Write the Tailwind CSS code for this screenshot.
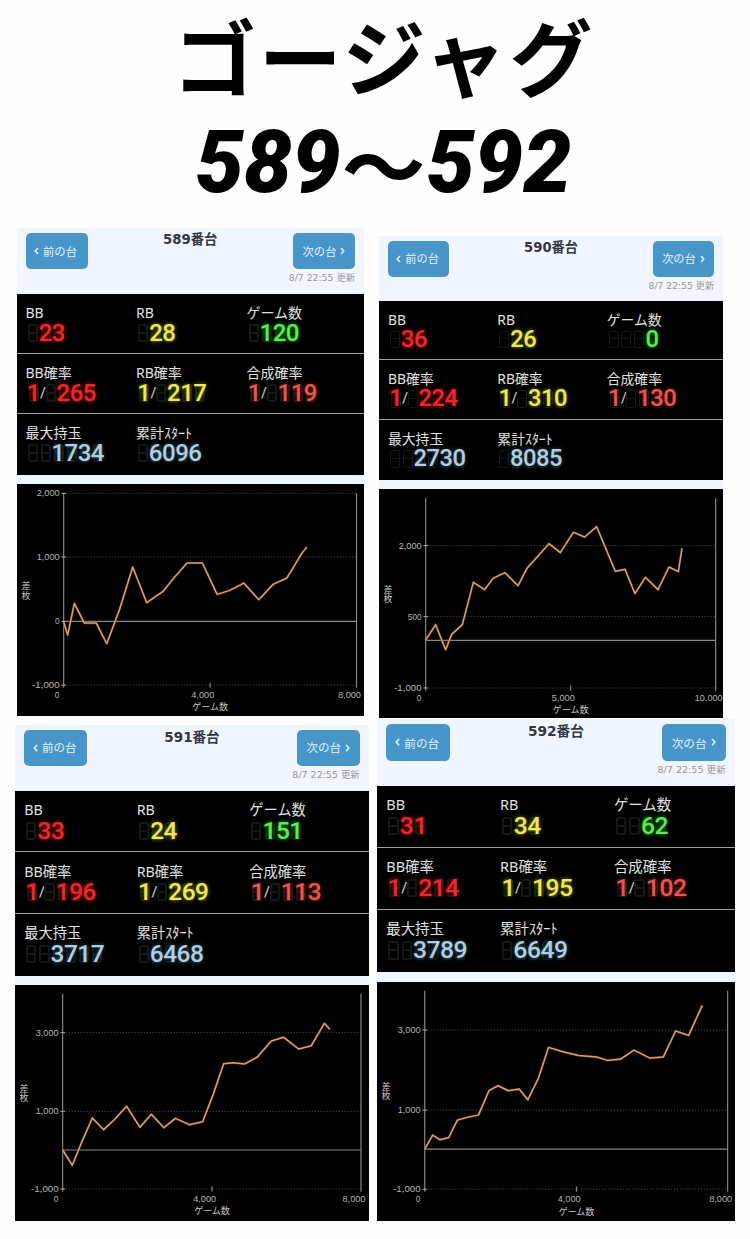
<!DOCTYPE html>
<html lang="ja">
<head>
    <meta charset="UTF-8">
    <meta name="viewport" content="width=device-width, initial-scale=1.0">
    <title>ゴージャグ 589〜592</title>
    <script src="https://cdn.jsdelivr.net/npm/@tailwindcss/browser@4"></script>
</head>
<body class="bg-[#fefefe] w-[750px] h-[1239px] overflow-hidden">

<!-- Heading -->
<header class="h-[228px] pt-[2px] pl-[18px] text-center text-black whitespace-nowrap">
    <h1 class="text-[83px] leading-[104px] tracking-[2.5px] font-bold font-['Noto_Sans_CJK_JP',sans-serif]">ゴージャグ</h1>
    <p class="flex justify-center text-[86px] leading-[88px] mt-[13px] pr-[1px] font-black font-[Roboto,sans-serif]">
        <span class="italic">589</span>
        <span class="w-[86px] flex justify-center text-[84px] font-bold font-['Noto_Sans_CJK_JP',sans-serif]">〜</span>
        <span class="italic">592</span>
    </p>
</header>

<!-- Machines -->
<main class="flex items-start">
    <div class="w-[377px] shrink-0">
        <div id="m589" class="pl-[16.5px]"></div>
        <div id="m591" class="pl-[15px] pt-[9px]"></div>
    </div>
    <div class="shrink-0 pt-[8px]">
        <div id="m590" class="pl-[2px]"></div>
        <div id="m592" class="pt-[1px]"></div>
    </div>
</main>

<script>
const red = 'text-[#e82a2c] [text-shadow:0_0_4px_#c00]';
const yellow = 'text-[#ece85a] [text-shadow:0_0_4px_#8a8a00]';
const green = 'text-[#5fe95a] [text-shadow:0_0_4px_#0a0]';
const coral = 'text-[#e05a54] [text-shadow:0_0_4px_#a11]';
const blue = 'text-[#b4cddd] [text-shadow:0_0_4px_#2c5a78]';

// Chart coordinates are in the chart's own drawing units (3 per pixel)
const machines = [
    {
        no: 589, width: 347.5, bb: 23, rb: 28, games: 120, bbRate: 265, rbRate: 217, total: 119, max: 1734, start: 6096,
        box: [20, 10, 1042, 696], left: 160, right: 1038, top: 38, bottom: 613, zero: 422, mid: 599,
        ticks: [['2,000', 38], ['1,000', 229], ['0', 422], ['-1,000', 613]], xLabels: ['4,000', '8,000'], unit: 302,
        points: '160,424 172,463 192,368 222,427 258,427 289,489 328,385 367,259 409,366 457,333 492,290 530,247 576,247 620,341 658,329 700,307 745,357 788,311 829,292 874,218 889,199'
    },
    {
        no: 590, width: 344, bb: 36, rb: 26, games: 0, bbRate: 224, rbRate: 310, total: 130, max: 2730, start: 8085,
        box: [27, 26, 1032, 686], left: 167, right: 1037, top: 52, bottom: 623, zero: 480, mid: 602,
        ticks: [['2,000', 196], ['500', 409], ['-1,000', 623]], xLabels: ['5,000', '10,000'], unit: 314,
        points: '167,479 197,433 227,508 245,462 277,433 310,306 344,328 369,294 405,277 444,316 471,264 537,190 571,217 610,156 644,170 680,139 736,273 765,267 795,340 826,291 864,328 897,260 925,274 936,204'
    },
    {
        no: 591, width: 354, bb: 33, rb: 24, games: 151, bbRate: 196, rbRate: 269, total: 113, max: 3717, start: 6468,
        box: [15, 28, 1062, 708], left: 158, right: 1053, top: 54, bottom: 640, zero: 523, mid: 606,
        ticks: [['3,000', 171], ['1,000', 407], ['-1,000', 640]], xLabels: ['4,000', '8,000'], unit: 325,
        points: '158,523 187,569 215,500 247,427 281,462 312,433 350,392 390,455 424,416 462,456 496,428 538,447 578,438 610,355 641,264 670,261 704,265 742,244 784,196 821,185 866,220 904,210 943,143 960,161'
    },
    {
        no: 592, width: 358, bb: 31, rb: 34, games: 62, bbRate: 214, rbRate: 195, total: 102, max: 3789, start: 6649,
        box: [20, 20, 1073, 717], left: 163, right: 1071, top: 46, bottom: 641, zero: 521, mid: 618,
        ticks: [['3,000', 164], ['1,000', 404], ['-1,000', 641]], xLabels: ['4,000', '8,000'], unit: 320,
        points: '163,521 187,479 209,493 235,486 261,434 293,425 324,419 356,345 383,331 414,346 446,341 472,373 504,308 534,216 580,230 624,240 678,245 711,255 750,251 790,224 838,248 878,245 915,167 954,180 995,90'
    }
];

// Number right-aligned over the unlit cells of the display
function led(value, cells, color) {
    const unlit = `<span class="flex flex-col w-[10px] h-[18px] mr-[3px] border-2 border-[#121815] rounded-[2px]">
        <span class="h-[8px] border-b-2 border-[#121815]"></span>
    </span>`;
    return `<span class="relative inline-flex justify-end" style="width:${cells * 13}px">
        <span class="absolute left-[1.5px] top-[1px] flex">${unlit.repeat(cells)}</span>
        <span class="relative ${color}">${value}</span>
    </span>`;
}

function rate(value, color) {
    return `<span class="pl-[1px] flex">${led(1, 1, color)}</span><span class="relative w-[5px] text-[15px] text-[#bbb] text-center">/</span><span class="-ml-[1px] flex">${led(value, 4, color)}</span>`;
}

function cell(label, value) {
    return `<div class="w-[110.5px] pt-[9px]">
        <div class="h-[20px] text-[14px] leading-[20px] text-[#e0e0e0] font-['Noto_Sans','Noto_Sans_CJK_JP',sans-serif]">${label}</div>
        <div class="flex items-center h-[20px] pl-[0.5px] text-[24px] leading-[20px] tracking-[-0.48px] font-medium font-[Roboto,sans-serif]">${value}</div>
    </div>`;
}

function chart(m) {
    const [x, y, w, h] = m.box;
    const axisText = (text, tx, ty, anchor) =>
        `<text x="${tx}" y="${ty}" text-anchor="${anchor}" textLength="${text.length * 13.8}" lengthAdjust="spacingAndGlyphs">${text}</text>`;
    return `<svg class="block w-full bg-black" viewBox="${x} ${y} ${w} ${h}">
        ${m.ticks.filter(t => t[0] !== '0').map(t => `<path d="M${m.left} ${t[1]}H${m.right}" stroke="#666" stroke-width="2.5" stroke-dasharray="3 6"/>`).join('')}
        <path d="M${m.left} ${m.zero}H${m.right}" stroke="#888" stroke-width="3.5"/>
        <path d="M${m.left} ${m.top}V${m.bottom + 8}M${m.right} ${m.top}V${m.bottom + 8}M${m.mid} ${m.bottom - 8}V${m.bottom + 8}" stroke="#888" stroke-width="3.5"/>
        ${m.ticks.map(t => `<path d="M${m.left - 7} ${t[1]}h14" stroke="#aaa" stroke-width="3"/>`).join('')}
        <g fill="#b4b4b4" font-size="28" font-family="Liberation Sans, sans-serif">
            ${m.ticks.map(t => axisText(t[0], m.left - 12, t[1] + 9, 'end')).join('')}
            ${axisText('0', m.left - 20, m.bottom + 38, 'middle')}
            ${axisText(m.xLabels[0], m.mid - 22, m.bottom + 38, 'middle')}
            ${axisText(m.xLabels[1], m.right - 21, m.bottom + 38, 'middle')}
        </g>
        <g fill="#c8c8c8" font-size="27" font-family="Noto Sans CJK JP, sans-serif" text-anchor="middle">
            <text x="${m.mid}" y="${m.bottom + 76}">ゲーム数</text>
            <text x="${x + 27}" y="${m.unit + 23}">差</text>
            <text x="${x + 27}" y="${m.unit + 52}">枚</text>
        </g>
        <polyline points="${m.points}" fill="none" stroke="#6b2f08" stroke-opacity="0.6" stroke-width="8" stroke-linejoin="round"/>
        <polyline points="${m.points}" fill="none" stroke="#dba26c" stroke-width="4.5" stroke-linejoin="round"/>
    </svg>`;
}

function panel(m) {
    const arrow = d => `<svg class="w-[5px] h-[8px]" viewBox="0 0 5 8" fill="none" stroke="currentColor" stroke-width="1.5"><path d="${d}"/></svg>`;
    return `<section class="w-[347.5px] bg-[#f0f5fe]" style="zoom:${m.width / 347.5}">
        <div class="flex justify-between h-[65.5px] pt-[5px] px-[9px] font-['DejaVu_Sans','Noto_Sans_CJK_JP',sans-serif]">
            <button class="flex items-center justify-center gap-[4px] w-[62px] h-[36px] pr-[2px] rounded-[5px] bg-[#4795c9] text-[#e4f2fb] text-[11.3px] font-['Noto_Sans_CJK_JP',sans-serif]">${arrow('M4 1L1.2 4L4 7')}前の台</button>
            <h2 class="h-[14px] text-[13.3px] leading-[14px] font-bold text-[#333740]">${m.no}番台</h2>
            <div class="flex flex-col items-end w-[62px]">
                <button class="flex shrink-0 items-center justify-center gap-[4px] w-[62px] h-[36px] rounded-[5px] bg-[#4795c9] text-[#e4f2fb] text-[11.3px] font-['Noto_Sans_CJK_JP',sans-serif]">次の台${arrow('M1 1L3.8 4L1 7')}</button>
                <span class="mt-[2px] text-[9.3px] leading-[14px] whitespace-nowrap text-[#999]">8/7 22:55 更新</span>
            </div>
        </div>
        <div class="bg-black divide-y divide-[#a0a0a0]">
            <div class="flex h-[60px] pl-[9px]">
                ${cell('BB', led(m.bb, 3, red))}${cell('RB', led(m.rb, 3, yellow))}${cell('ゲーム数', led(m.games, 4, green))}
            </div>
            <div class="flex h-[60.5px] pl-[9px]">
                ${cell('BB確率', rate(m.bbRate, red))}${cell('RB確率', rate(m.rbRate, yellow))}${cell('合成確率', rate(m.total, coral))}
            </div>
            <div class="flex h-[60.5px] pl-[9px]">
                ${cell('最大持玉', led(m.max, 6, blue))}${cell('累計ｽﾀｰﾄ', led(m.start, 5, blue))}
            </div>
        </div>
        <div class="pt-[9px]">${chart(m)}</div>
    </section>`;
}

machines.forEach(m => {
    document.getElementById(`m${m.no}`).innerHTML = panel(m);
});
</script>
</body>
</html>
